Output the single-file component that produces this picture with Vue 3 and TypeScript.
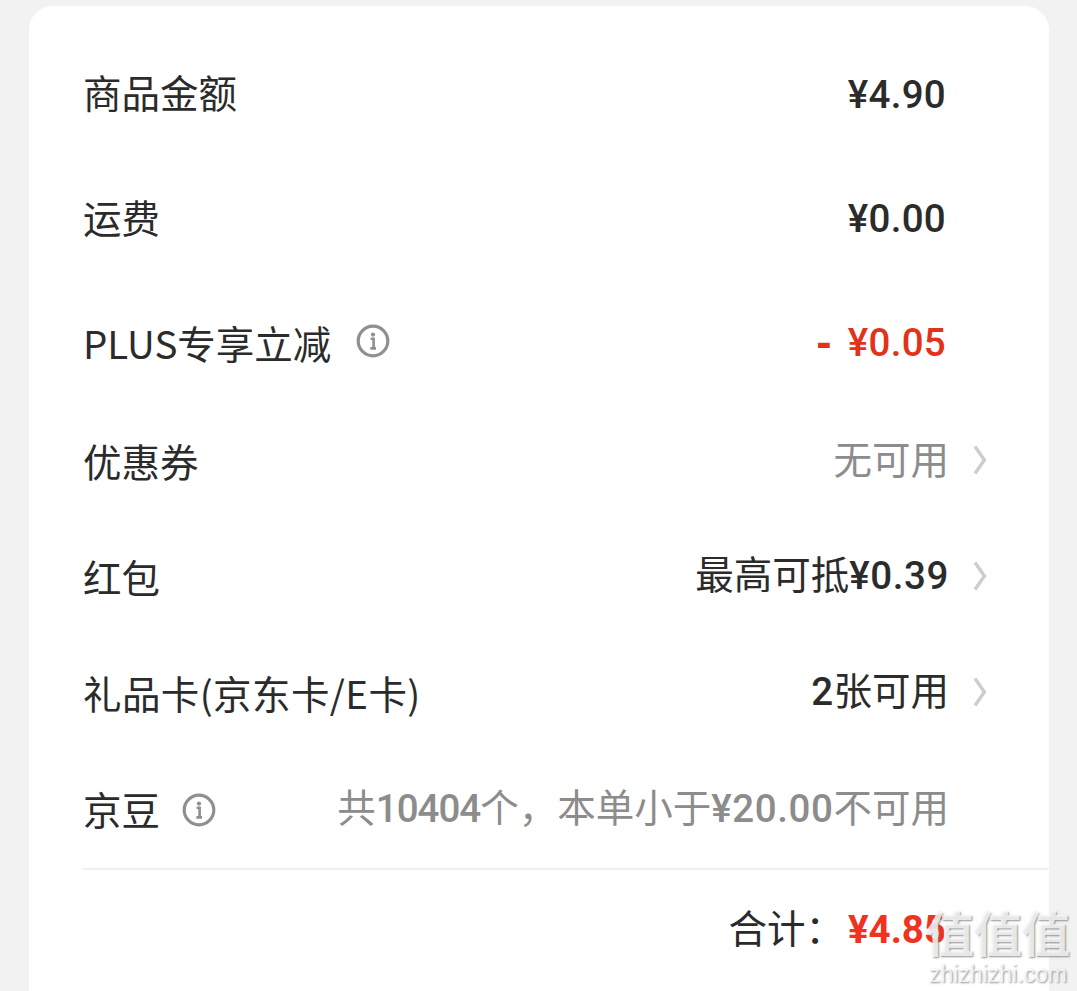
<script setup lang="ts">
interface Part { text: string; kind?: 'num' | 'narrow' | 'dash' }
interface Row {
  label: string;
  info?: boolean;
  parts: Part[];
  tone: 'dark' | 'red' | 'gray';
  chevron?: boolean;
  rowClass: string;
}
const rows: Row[] = [
  { label: '商品金额', parts: [{ text: '¥4.90', kind: 'num' }], tone: 'dark', rowClass: 'r1' },
  { label: '运费', parts: [{ text: '¥0.00', kind: 'num' }], tone: 'dark', rowClass: 'r2' },
  { label: 'PLUS专享立减', info: true, parts: [{ text: '-', kind: 'dash' }, { text: '¥0.05', kind: 'num' }], tone: 'red', rowClass: 'r3' },
  { label: '优惠券', parts: [{ text: '无可用' }], tone: 'gray', chevron: true, rowClass: 'r4' },
  { label: '红包', parts: [{ text: '最高可抵' }, { text: '¥0.39', kind: 'num' }], tone: 'dark', chevron: true, rowClass: 'r5' },
  { label: '礼品卡(京东卡/E卡)', parts: [{ text: '2', kind: 'num' }, { text: '张可用' }], tone: 'dark', chevron: true, rowClass: 'r6' },
  { label: '京豆', info: true, parts: [{ text: '共' }, { text: '10404', kind: 'narrow' }, { text: '个，本单小于' }, { text: '¥20.00', kind: 'num' }, { text: '不可用' }], tone: 'gray', rowClass: 'r7' },
];
</script>

<template>
  <div class="page">
    <section class="card">
      <div v-for="row in rows" :key="row.label" class="row" :class="row.rowClass">
        <div class="label">
          <span>{{ row.label }}</span>
          <svg v-if="row.info" class="info" viewBox="0 0 34 34" aria-hidden="true">
            <circle cx="17" cy="17" r="14.8" fill="none" stroke="#8f8f8f" stroke-width="3.2" />
            <circle cx="17" cy="10.6" r="2.1" fill="#8f8f8f" />
            <path d="M14.6 14.8h3v9.4M14.4 24.4h5.6" fill="none" stroke="#8f8f8f" stroke-width="2.6" />
          </svg>
        </div>
        <div class="value" :class="row.tone">
          <span v-for="(part, i) in row.parts" :key="i" :class="part.kind">{{ part.text }}</span>
        </div>
        <div class="slot">
          <svg v-if="row.chevron" class="chevron" viewBox="0 0 14 30" aria-hidden="true">
            <path d="M2 1.5 11.4 15 2 28.5" fill="none" stroke="#cdcdcd" stroke-width="3.4" />
          </svg>
        </div>
      </div>
      <div class="total">
        <span class="total-label">合计：</span>
        <span class="total-value">¥4.85</span>
      </div>
    </section>
    <div class="watermark">
      <div class="wm-big">值值值</div>
      <div class="wm-small">zhizhizhi.com</div>
    </div>
  </div>
</template>

<style scoped>
.page {
  position: relative;
  width: 1077px;
  height: 991px;
  overflow: hidden;
  background: #f2f2f2;
  box-sizing: border-box;
  padding: 6px 28px 0 29px;
  font-family: "Noto Sans CJK SC", "Noto Sans", sans-serif;
}
.card {
  height: 1000px;
  background: #fff;
  border-radius: 24px 24px 0 0;
  padding: 26px 0 0 54px;
  box-sizing: border-box;
}
.row {
  display: flex;
  align-items: center;
  justify-content: space-between;
  font-size: 38.5px;
  line-height: 50px;
  padding-right: 62px;
  color: #2b2b2b;
}
.r1 { height: 125px; }
.r2 { height: 124px; }
.r3 { height: 122px; }
.r4 { height: 117px; }
.r5 { height: 116px; }
.r6 { height: 116px; }
.r7 { height: 115px; }
.label {
  display: flex;
  align-items: center;
  white-space: nowrap;
}
.r1 .label { margin-top: -8px; }
.r2 .label { margin-top: -6px; }
.r4 .label,
.r5 .label,
.r6 .label,
.r7 .label { margin-top: -4px; }
.r6 .label { letter-spacing: 0.4px; }
.info {
  width: 34px;
  height: 34px;
  margin-left: 25px;
}
.r3 .info { margin-top: -3px; }
.r7 .info {
  margin-left: 22px;
  margin-top: 4px;
}
.value {
  margin-left: auto;
  white-space: nowrap;
  margin-top: -4px;
}
.r3 .value { margin-top: -2px; }
.r4 .value { margin-top: -10px; margin-right: -3px; }
.r5 .value,
.r6 .value { margin-top: -8px; margin-right: -3px; }
.r7 .value { margin-top: -6px; margin-right: -3px; }
.dark { color: #2b2b2b; }
.red { color: #e2321a; }
.gray { color: #8c8c8c; }
.num,
.narrow {
  font-family: Roboto, "Liberation Sans", sans-serif;
  font-weight: 500;
  font-size: 38.5px;
}
.num { letter-spacing: 0.3px; }
.r5 .num,
.r7 .num { letter-spacing: 0.6px; }
.narrow { letter-spacing: -1px; }
.dash {
  font-family: "DejaVu Sans", sans-serif;
  font-weight: 700;
  font-size: 38px;
  margin-right: 16px;
}
.slot {
  width: 41px;
  display: flex;
  justify-content: flex-end;
  flex: none;
}
.chevron {
  width: 14px;
  height: 30px;
  margin-top: -4px;
}
.total {
  border-top: 2px solid #f0f0f0;
  height: 120px;
  box-sizing: border-box;
  padding: 31px 103px 0 0;
  display: flex;
  justify-content: flex-end;
  align-items: flex-start;
  margin-top: 1px;
  line-height: 50px;
}
.total-label {
  font-size: 38.5px;
  color: #2b2b2b;
  margin-right: 4px;
}
.total-value {
  font-family: Roboto, "Liberation Sans", sans-serif;
  font-weight: 700;
  font-size: 38.5px;
  color: #f0321e;
  margin-top: 4px;
}
.watermark {
  position: absolute;
  left: 925px;
  top: 901px;
  width: 146px;
  text-align: center;
  color: rgba(255, 255, 255, 0.8);
  text-shadow: 1px 1px 2px rgba(110, 110, 110, 0.75);
}
.wm-big {
  font-size: 48px;
  font-weight: 700;
  line-height: 60px;
  white-space: nowrap;
}
.wm-small {
  font-family: "Liberation Sans", sans-serif;
  font-size: 23px;
  line-height: 26px;
  white-space: nowrap;
}
</style>
